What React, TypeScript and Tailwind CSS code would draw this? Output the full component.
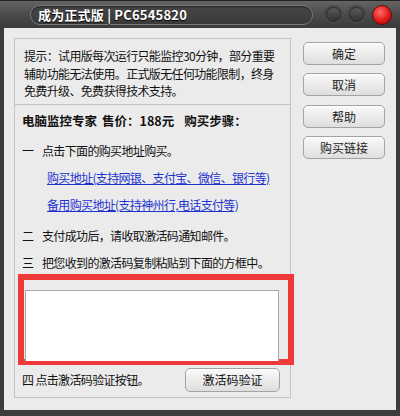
const cjk = { fontFamily: '"Noto Sans CJK SC", "Liberation Sans", sans-serif' };

function SideButton({ label, className = '' }: { label: string; className?: string }) {
  return (
    <button
      className={`w-[82px] h-[23px] rounded-[5px] border border-[#a3a3a3] bg-gradient-to-b from-[#fafafa] to-[#dedede] text-[12px] leading-none text-[#222] shadow-[inset_0_1px_0_#fff] ${className}`}
    >
      {label}
    </button>
  );
}

export default function App() {
  return (
    <div className="w-[400px] h-[416px] bg-[#3c3c3c] flex flex-col text-[#111]" style={cjk}>
      {/* title bar */}
      <div className="h-[28px] flex items-center bg-gradient-to-b from-[#646464] via-[#4c4c4c] to-[#3a3a3a] border-t border-[#222]">
        <div className="ml-[30px] w-[283px] h-[20px] rounded-full border border-[#7a7a7a] bg-gradient-to-b from-[#474747] to-[#3a3a3a] shadow-[inset_0_1px_2px_#222] flex items-center pl-[7px]">
          <span className="text-white font-bold text-[13px] leading-none tracking-[0.2px] [text-shadow:0_1px_1px_#000]">
            成为正式版 | PC6545820
          </span>
        </div>
        <div className="ml-auto mr-[8px] flex items-center gap-[8px]">
          <span className="w-[15px] h-[15px] rounded-full bg-gradient-to-b from-[#5a5a5a] to-[#333] border border-[#2a2a2a] shadow-[0_0_0_2px_#484848]" />
          <span className="w-[15px] h-[15px] rounded-full bg-gradient-to-b from-[#5a5a5a] to-[#333] border border-[#2a2a2a] shadow-[0_0_0_2px_#484848]" />
          <span className="w-[20px] h-[20px] rounded-full bg-[radial-gradient(circle_at_40%_35%,#ff6b6b,#e01818_55%,#9a0808)] border border-[#5a1010]" />
        </div>
      </div>

      {/* body */}
      <div className="flex-1 mx-[4px] mb-[6px] bg-[#ebebeb] flex items-start">
        <div className="ml-[10px] mt-[10px] w-[277px] h-[360px] border border-[#c4c4c4] flex flex-col">
          <div className="h-[66px] border-b border-[#c4c4c4] px-[9px] pt-[8px] text-[12px] leading-[17.5px] tracking-[-0.65px] whitespace-nowrap">
            提示：试用版每次运行只能监控30分钟，部分重要
            <br />
            辅助功能无法使用。正式版无任何功能限制，终身
            <br />
            免费升级、免费获得技术支持。
          </div>

          <div className="pl-[7px] flex flex-col text-[12px] tracking-[-0.65px] whitespace-nowrap">
            <div className="mt-[7px] h-[17px] leading-[17px] font-bold text-[12.5px] tracking-normal flex">
              <span>电脑监控专家</span>
              <span className="ml-[5px]">售价：188元</span>
              <span className="ml-[10px]">购买步骤：</span>
            </div>
            <div className="mt-[13px] h-[17px] leading-[17px] flex">
              <span className="w-[20px]">一</span>
              <span>点击下面的购买地址购买。</span>
            </div>
            <a className="mt-[10px] ml-[25px] h-[17px] leading-[17px] text-[#1d33d0] underline" href="#">
              购买地址(支持网银、支付宝、微信、银行等)
            </a>
            <a className="mt-[10px] ml-[25px] h-[17px] leading-[17px] text-[#1d33d0] underline" href="#">
              备用购买地址(支持神州行,电话支付等)
            </a>
            <div className="mt-[14px] h-[17px] leading-[17px] flex">
              <span className="w-[20px]">二</span>
              <span>支付成功后，请收取激活码通知邮件。</span>
            </div>
            <div className="mt-[10px] h-[17px] leading-[17px] flex">
              <span className="w-[20px]">三</span>
              <span>把您收到的激活码复制粘贴到下面的方框中。</span>
            </div>

            <div className="mt-[3px] ml-[-4px] w-[276px] h-[91px] border-[6px] border-[#f03a3a] pl-[1px] pt-[10px] pr-[9px]">
              <textarea className="w-full h-[71px] bg-white border border-[#a8a8a8] border-b-0 resize-none outline-none" />
            </div>

            <div className="mt-[3px] h-[24px] flex items-center pr-[10px]">
              <span className="leading-none">四 点击激活码验证按钮。</span>
              <button className="ml-auto w-[95px] h-[24px] rounded-[5px] border border-[#a3a3a3] bg-gradient-to-b from-[#fafafa] to-[#dedede] text-[12px] leading-none tracking-normal shadow-[inset_0_1px_0_#fff]">
                激活码验证
              </button>
            </div>
          </div>
        </div>

        <div className="ml-[12px] mt-[14px] flex flex-col gap-[8px]">
          <SideButton label="确定" />
          <SideButton label="取消" />
          <SideButton label="帮助" className="mt-[1px]" />
          <SideButton label="购买链接" />
        </div>
      </div>
    </div>
  );
}
